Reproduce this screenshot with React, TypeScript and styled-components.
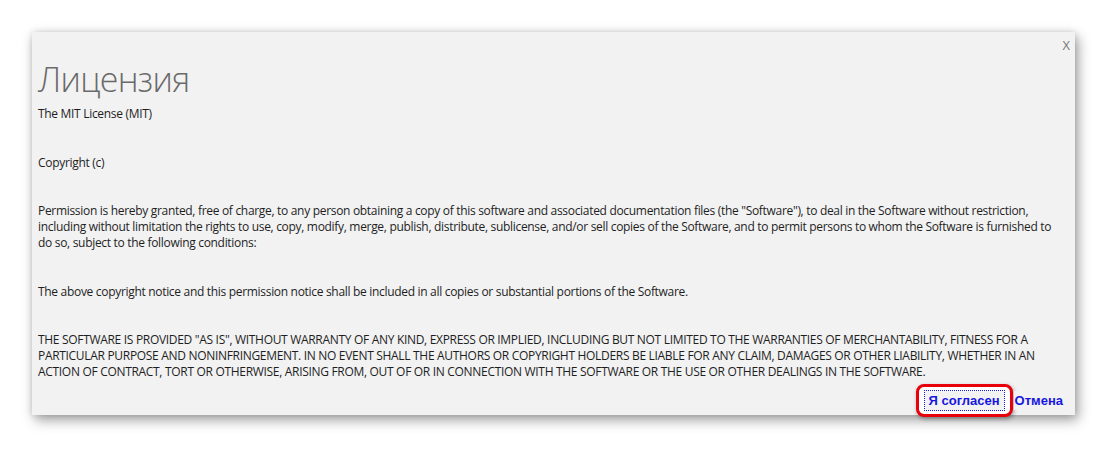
import styled, { createGlobalStyle } from 'styled-components';

const GlobalStyle = createGlobalStyle`
  html, body {
    margin: 0;
    padding: 0;
    background: #ffffff;
  }
`;

const Page = styled.div`
  width: 1107px;
  height: 451px;
  box-sizing: border-box;
  padding: 32px 32px 0 32px;
`;

const Dialog = styled.section`
  position: relative;
  width: 1043px;
  height: 383px;
  box-sizing: border-box;
  padding: 24px 11px 0 6px;
  background: #f2f2f2;
  box-shadow: 3px 5px 12px rgba(0, 0, 0, 0.38), 0 0 6px rgba(0, 0, 0, 0.12);
  display: flex;
  flex-direction: column;
  font-family: "Open Sans", "Noto Sans", sans-serif;
  color: #1e1e1e;
`;

const Close = styled.span`
  position: absolute;
  top: 5px;
  right: 5px;
  font-family: "Open Sans", sans-serif;
  font-size: 13px;
  color: #777;
  line-height: 16px;
`;

const Title = styled.h1`
  margin: 0;
  font-size: 34px;
  font-weight: 300;
  line-height: 47px;
  color: #6a6a6a;
  letter-spacing: -0.7px;
`;

const Body = styled.div`
  margin-top: 3px;
  flex: 1;
`;

const Paragraph = styled.p<{ $last?: boolean }>`
  margin: 0 0 ${p => (p.$last ? '0' : '32.5px')};
  font-size: 12px;
  line-height: 16px;
  letter-spacing: -0.31px;
`;

const Footer = styled.div`
  display: flex;
  justify-content: flex-end;
  align-items: center;
  gap: 1px;
  height: 30px;
`;

const Highlight = styled.span`
  display: inline-flex;
  padding: 4px 6px;
  border: 3px solid #e8000b;
  border-radius: 8px;
  background: #ffffff;
  box-shadow: 1px 2px 4px rgba(0, 0, 0, 0.35);
`;

const Action = styled.button<{ $focused?: boolean }>`
  background: #f2f2f2;
  border: none;
  padding: ${p => (p.$focused ? '1px 4px' : '1px 1px')};
  margin: 0;
  font-family: "Liberation Sans", Arial, sans-serif;
  font-size: 13px;
  font-weight: bold;
  color: #1616e0;
  line-height: 17px;
  cursor: pointer;
  outline: ${p => (p.$focused ? '1px dotted #1616e0' : 'none')};
`;

export default function App() {
  return (
    <>
      <GlobalStyle />
      <Page>
        <Dialog>
          <Close>X</Close>
          <Title>Лицензия</Title>
          <Body>
            <Paragraph>The MIT License (MIT)</Paragraph>
            <Paragraph>Copyright (c)</Paragraph>
            <Paragraph>
              Permission is hereby granted, free of charge, to any person obtaining a copy of this software and
              associated documentation files (the "Software"), to deal in the Software without restriction,
              including without limitation the rights to use, copy, modify, merge, publish, distribute, sublicense,
              and/or sell copies of the Software, and to permit persons to whom the Software is furnished to do so,
              subject to the following conditions:
            </Paragraph>
            <Paragraph>
              The above copyright notice and this permission notice shall be included in all copies or substantial
              portions of the Software.
            </Paragraph>
            <Paragraph $last>
              THE SOFTWARE IS PROVIDED "AS IS", WITHOUT WARRANTY OF ANY KIND, EXPRESS OR IMPLIED, INCLUDING BUT NOT
              LIMITED TO THE WARRANTIES OF MERCHANTABILITY, FITNESS FOR A PARTICULAR PURPOSE AND NONINFRINGEMENT. IN
              NO EVENT SHALL THE AUTHORS OR COPYRIGHT HOLDERS BE LIABLE FOR ANY CLAIM, DAMAGES OR OTHER LIABILITY,
              WHETHER IN AN ACTION OF CONTRACT, TORT OR OTHERWISE, ARISING FROM, OUT OF OR IN CONNECTION WITH THE
              SOFTWARE OR THE USE OR OTHER DEALINGS IN THE SOFTWARE.
            </Paragraph>
          </Body>
          <Footer>
            <Highlight>
              <Action $focused>Я согласен</Action>
            </Highlight>
            <Action>Отмена</Action>
          </Footer>
        </Dialog>
      </Page>
    </>
  );
}
